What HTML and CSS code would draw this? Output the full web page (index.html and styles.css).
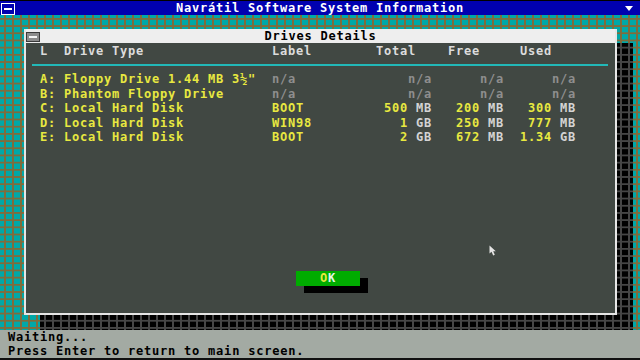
FILE: index.html
```html
<!DOCTYPE html>
<html lang="en">
<head>
  <meta charset="UTF-8" />
  <meta name="viewport" content="width=device-width, initial-scale=1.0"/>
  <title>Navrátil Software System Information</title>
  <link rel="stylesheet" href="styles.css">
</head>
<body>
  <div class="screen">
    <div class="topbar">
      <span class="sysbox"><span class="dash"></span></span>
      <span class="title">Navrátil Software System Information</span>
      <span class="down"></span>
    </div>

    <div class="desk">
      <div class="dialog">
        <div class="dlg-title">
          <span class="dlg-box"><span class="dash"></span></span>
          <span class="dlg-name">Drives Details</span>
          <span></span>
        </div>

        <div class="dlg-body">
          <div class="row head">
            <span>L</span>
            <span>Drive Type</span>
            <span>Label</span>
            <span class="h-total">Total</span>
            <span class="h-free">Free</span>
            <span class="h-used">Used</span>
          </div>
          <div class="rule"></div>

          <div class="row">
            <span>A:</span>
            <span>Floppy Drive 1.44 MB 3½"</span>
            <span class="na">n/a</span>
            <span class="num na">n/a</span>
            <span class="num na">n/a</span>
            <span class="num na">n/a</span>
          </div>
          <div class="row">
            <span>B:</span>
            <span>Phantom Floppy Drive</span>
            <span class="na">n/a</span>
            <span class="num na">n/a</span>
            <span class="num na">n/a</span>
            <span class="num na">n/a</span>
          </div>
          <div class="row">
            <span>C:</span>
            <span>Local Hard Disk</span>
            <span>BOOT</span>
            <span class="num"><b>500</b> MB</span>
            <span class="num"><b>200</b> MB</span>
            <span class="num"><b>300</b> MB</span>
          </div>
          <div class="row">
            <span>D:</span>
            <span>Local Hard Disk</span>
            <span>WIN98</span>
            <span class="num"><b>1</b> GB</span>
            <span class="num"><b>250</b> MB</span>
            <span class="num"><b>777</b> MB</span>
          </div>
          <div class="row">
            <span>E:</span>
            <span>Local Hard Disk</span>
            <span>BOOT</span>
            <span class="num"><b>2</b> GB</span>
            <span class="num"><b>672</b> MB</span>
            <span class="num"><b>1.34</b> GB</span>
          </div>

          <div class="ok-btn"><span class="hot">O</span>K</div>
        </div>
      </div>

      <svg class="cursor" width="9" height="12" viewBox="0 0 9 12">
        <path d="M0.5 0.5 L0.5 8.5 L2.5 6.8 L4.2 10.5 L5.8 9.8 L4.2 6.2 L6.8 6.2 Z" fill="#e4e4e4"/>
      </svg>
    </div>

    <div class="status">
      <div>Waiting...</div>
      <div>Press Enter to return to main screen.</div>
    </div>
  </div>
</body>
</html>
```

FILE: styles.css
```css
* {
  box-sizing: border-box;
}

body {
  margin: 0;
  background: #000;
  font-family: "DejaVu Sans Mono", "Liberation Mono", monospace;
  font-weight: bold;
  font-size: 12px;
  letter-spacing: 0.78px;
  line-height: 14.4px;
}

.screen {
  width: 640px;
  height: 360px;
  display: flex;
  flex-direction: column;
  overflow: hidden;
}

/* top bar */
.topbar {
  height: 15px;
  border-top: 1px solid #000;
  background: #0000b0;
  color: #fff;
  display: grid;
  grid-template-columns: 24px 1fr 24px;
  align-items: center;
  line-height: 14px;
}

.sysbox {
  width: 14px;
  height: 12px;
  margin: 2px 0 0 1px;
  border: 1px solid #fff;
  display: flex;
  align-items: center;
  justify-content: center;
}

.sysbox .dash {
  width: 8px;
  height: 2px;
  background: #fff;
}

.title {
  text-align: center;
}

.down {
  width: 0;
  height: 0;
  margin-left: 9px;
  border-left: 4px solid transparent;
  border-right: 4px solid transparent;
  border-top: 5px solid #fff;
}

/* desktop with grid pattern */
.desk {
  flex: 1;
  position: relative;
  z-index: 0;
  padding: 14px 0 0 24px;
  background-color: #00a8a8;
  background-image:
    linear-gradient(to right, transparent 4px, #806c3c 4px, #806c3c 5.8px, transparent 5.8px),
    linear-gradient(to bottom, transparent 3.8px, #806c3c 3.8px, #806c3c 5.6px, transparent 5.6px);
  background-size: 8px 7.2px;
  background-attachment: fixed;
}

.dialog {
  position: relative;
  width: 593px;
  height: 286px;
  background: #414843;
  border: 2px solid #e6e6e6;
  border-top: 0;
  display: flex;
  flex-direction: column;
}

.dialog::before {
  content: "";
  position: absolute;
  left: 14px;
  top: 14px;
  width: 593px;
  height: 287px;
  z-index: -1;
  background-color: #000;
  background-image:
    linear-gradient(to right, transparent 4px, #464646 4px, #464646 5.6px, transparent 5.6px),
    linear-gradient(to bottom, transparent 3.8px, #464646 3.8px, #464646 5.4px, transparent 5.4px);
  background-size: 8px 7.2px;
  background-attachment: fixed;
}

.dlg-title {
  height: 14px;
  background: #eeeeee;
  color: #000;
  display: grid;
  grid-template-columns: 16px 1fr 16px;
  align-items: center;
  line-height: 14px;
}

.dlg-box {
  width: 14px;
  height: 10px;
  margin-top: 1px;
  border: 1px solid #3a3a3a;
  background: #8c8c8c;
  display: flex;
  align-items: center;
  justify-content: center;
}

.dlg-box .dash {
  width: 8px;
  height: 2px;
  background: #f4f4f4;
}

.dlg-name {
  text-align: center;
}

.dlg-body {
  flex: 1;
  padding: 1px 7px 0 6px;
  color: #e8e840;
}

.row {
  display: grid;
  grid-template-columns: 24px 208px 80px 80px 72px 72px;
  padding-left: 8px;
  height: 14.4px;
  white-space: pre;
}

.row.head {
  color: #dcdcdc;
}

.h-total {
  padding-left: 24px;
}

.h-free,
.h-used {
  padding-left: 16px;
}

.rule {
  height: 2px;
  margin: 5.6px 0 6.4px;
  background: #22b8b8;
}

.num {
  text-align: right;
  color: #d4d4d4;
}

.num b {
  color: #e8e840;
}

.na,
.num.na {
  color: #8e8e8e;
}

.ok-btn {
  width: 64px;
  height: 15px;
  margin: 127px 0 0 264px;
  background: #00ac00;
  color: #e6f6e6;
  text-align: center;
  line-height: 15px;
  box-shadow: 8px 7px 0 #000;
}

.ok-btn .hot {
  color: #e8e840;
}

.cursor {
  position: absolute;
  left: 489px;
  top: 230px;
}

/* status line */
.status {
  height: 30px;
  background: #a3aaa3;
  border-bottom: 2px solid #111;
  padding-left: 8px;
  color: #000;
  line-height: 14px;
}
```
